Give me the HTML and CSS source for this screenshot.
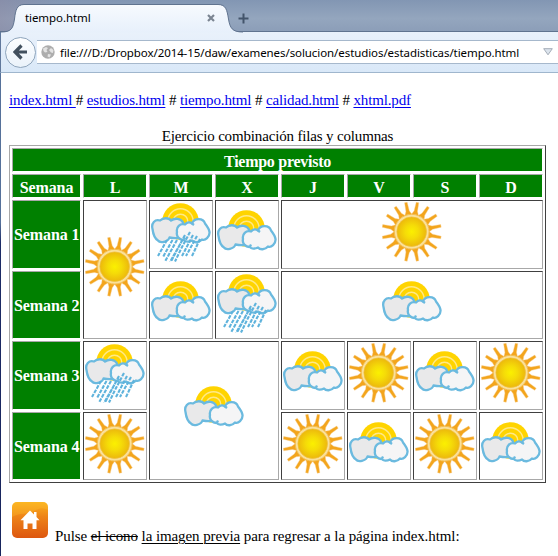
FILE: index.html
```html
<!DOCTYPE html>
<html lang="es">
<head>
<meta charset="utf-8">
<title>tiempo.html</title>
<link rel="stylesheet" href="styles.css">
</head>
<body>
<svg class="defs" width="0" height="0" aria-hidden="true">
  <defs>
    <radialGradient id="disc"><stop offset="0" stop-color="#fbf000"/><stop offset=".45" stop-color="#f5dc08"/><stop offset="1" stop-color="#ecb80c"/></radialGradient>
    <linearGradient id="homeFill" x1="0" y1="0" x2="0" y2="1"><stop offset="0" stop-color="#fbb21e"/><stop offset=".4" stop-color="#ee8418"/><stop offset="1" stop-color="#dd5710"/></linearGradient>
    <linearGradient id="tabFill" x1="0" y1="0" x2="0" y2="1"><stop offset="0" stop-color="#f7fafe"/><stop offset="1" stop-color="#e7f0fb"/></linearGradient>
    <g id="ray"><path d="M-3.6-17 L-1.7-21 L-1.3-29.8 H1.3 L1.7-21 L3.6-17Z"/></g>
    <g id="rays4"><use href="#ray" transform="rotate(11.25)"/><use href="#ray" transform="rotate(33.75)"/><use href="#ray" transform="rotate(56.25)"/><use href="#ray" transform="rotate(78.75)"/></g>
    <symbol id="sun" viewBox="0 0 60 60">
      <g transform="translate(29.7 29.7)">
        <g fill="#f3a51c" stroke="#f8cf91" stroke-width=".4"><use href="#rays4"/><use href="#rays4" transform="rotate(90)"/><use href="#rays4" transform="rotate(180)"/><use href="#rays4" transform="rotate(270)"/></g>
        <circle r="17.4" fill="#fae09a" stroke="#f3bc4c" stroke-width="1"/>
        <circle r="14.8" fill="url(#disc)" stroke="#efc03c" stroke-width=".7"/>
      </g>
    </symbol>
    <g id="cloudart">
      <circle cx="29.5" cy="26.5" r="18.3" fill="#ffd400"/>
      <g fill="none" stroke="#ffe987" stroke-width="1.5"><circle cx="29.5" cy="26.5" r="12.7"/><circle cx="29.5" cy="26.5" r="7.3"/></g>
      <g stroke="#6bbadf" stroke-width="2.3" stroke-linejoin="round">
        <path fill="#e9e9ea" d="M1.500 34C0 28 4 24 9 25.500C12 22.500 18 22.500 20 25.500C24 22.500 30 23.500 32 27.500L34 36L27 43C24 43.500 21 43 18.500 42.500C17 47 9 48.500 7 45.500C3 43 2 38 1.500 34Z"/>
        <path fill="#f5f5f6" d="M26 37C25 32 29 28 34 29.500C36 27 39 27 41 28.500C43 23 52 22.500 54 28.500C56 31 58 34 58.500 37C59 42 54 46 51 44.500C48 48 43 48 41 45.500C38 47 34 47 33 45C28 45 25 41 26 37Z"/>
        <path fill="none" d="M41 28.500L43 30M33 44.500L34 42.500"/>
      </g>
    </g>
    <symbol id="cloud" viewBox="0 0 60 60"><use href="#cloudart"/></symbol>
    <symbol id="rain" viewBox="0 0 60 60">
      <use href="#cloudart" y="-7"/>
      <g fill="none" stroke="#5fb3dc" stroke-width="2.1" stroke-dasharray="3.800 1.200">
        <path d="M16 38L7 54M21.500 38L12 55M26 38L14 59.500M31.500 38L19 60M34 33L25 50L20 59.500M39 30L30 47L24 59.500M42 33L31 54M46 34L35 54M49 37L41 54"/>
      </g>
    </symbol>
  </defs>
</svg>

<header class="browser">
  <div class="tabstrip">
    <div class="tab">
      <svg class="tab-shape" width="244" height="29" viewBox="0 0 244 29"><path d="M1 28.500C12 28 13 24 14.500 15C15.500 6 17 .8 24 .8H218C226 .8 227 6 228.500 15C230 24 232 28 243 28.500Z" fill="url(#tabFill)"/><path d="M1 28C12 28 13 24 14.500 15C15.500 6 17 .5 24 .5H218C226 .5 227 6 228.500 15C230 24 232 28 243 28" fill="none" stroke="#60738f"/></svg>
      <span class="tab-title">tiempo.html</span>
      <svg class="tab-close" width="8" height="8" viewBox="0 0 8 8"><path d="M1 1L7 7M7 1L1 7" stroke="#7b8592" stroke-width="2.200"/></svg>
    </div>
    <svg class="plus" width="11" height="11" viewBox="0 0 11 11"><path d="M5.500 .5V10.500M.5 5.500H10.500" stroke="#43546b" stroke-width="2"/></svg>
  </div>
  <div class="navbar">
    <div class="back"><svg width="15" height="16" viewBox="0 0 15 16"><path d="M8.500 1.500L2 8L8.500 14.500M2.500 8H14" fill="none" stroke="#42505e" stroke-width="3.200"/></svg></div>
    <div class="urlbar">
      <svg width="14" height="14" viewBox="0 0 14 14"><circle cx="7" cy="7" r="6.700" fill="#adadad"/><path d="M2 3.500L5 2L7 3L5.500 5L6.500 7L4 7.500L2.500 6ZM8 5L10 3L12.500 5L12 8L10 7.500ZM7 9L10 9.500L8.500 12.500L6.500 11.500Z" fill="#e3e3e3"/></svg>
      <span class="url">file:///D:/Dropbox/2014-15/daw/examenes/solucion/estudios/estadisticas/tiempo.html</span>
      <svg class="drop" width="10" height="8" viewBox="0 0 10 8"><path d="M.7 .7H9.300L5 6.800Z" fill="#dce4ed" stroke="#a3acb7"/></svg>
    </div>
  </div>
</header>

<main class="page">
  <nav class="links"><a href="#">index.html </a># <a href="#">estudios.html</a> # <a href="#">tiempo.html</a> # <a href="#">calidad.html</a> # <a href="#">xhtml.pdf</a></nav>

  <table class="forecast">
    <caption>Ejercicio combinación filas y columnas</caption>
    <colgroup><col class="week"><col span="7" class="day"></colgroup>
    <tr class="head title"><th colspan="8">Tiempo previsto</th></tr>
    <tr class="head"><th>Semana</th><th>L</th><th>M</th><th>X</th><th>J</th><th>V</th><th>S</th><th>D</th></tr>
    <tr class="tall"><th>Semana 1</th><td rowspan="2"><svg><use href="#sun"/></svg></td><td><svg><use href="#rain"/></svg></td><td><svg><use href="#cloud"/></svg></td><td colspan="4"><svg><use href="#sun"/></svg></td></tr>
    <tr class="short"><th>Semana 2</th><td><svg><use href="#cloud"/></svg></td><td><svg><use href="#rain"/></svg></td><td colspan="4"><svg><use href="#cloud"/></svg></td></tr>
    <tr class="tall"><th>Semana 3</th><td><svg><use href="#rain"/></svg></td><td colspan="2" rowspan="2"><svg><use href="#cloud"/></svg></td><td><svg><use href="#cloud"/></svg></td><td><svg><use href="#sun"/></svg></td><td><svg><use href="#cloud"/></svg></td><td><svg><use href="#sun"/></svg></td></tr>
    <tr class="short"><th>Semana 4</th><td><svg><use href="#sun"/></svg></td><td><svg><use href="#sun"/></svg></td><td><svg><use href="#cloud"/></svg></td><td><svg><use href="#sun"/></svg></td><td><svg><use href="#cloud"/></svg></td></tr>
  </table>

  <p class="return">
    <svg class="home" width="36" height="36" viewBox="0 0 36 36"><rect width="36" height="36" rx="5" fill="url(#homeFill)"/><path d="M0 15C9 10 15 13 22 9S32 6 36 8V4C36 2 34 0 31 0H5C2 0 0 2 0 5Z" fill="#ffc52d" opacity=".3"/><path d="M18 8.500L8.500 18.200H11.500V27H15.500V21.500H20.500V27H24.500V18.200H27.500L24.500 15V10H22V12.500Z" fill="#fff"/></svg>
    <span class="sentence">Pulse <del>el icono</del> <ins>la imagen previa</ins> para regresar a la página index.html:</span>
  </p>
</main>
</body>
</html>
```
FILE: styles.css
```css
* { box-sizing: border-box; }
html, body { margin: 0; height: 556px; overflow: hidden; }
body { background: #fff; color: #000; font: 15px/19px "Liberation Serif", serif; }
.defs { position: absolute; }

.browser { font-family: "Noto Sans", sans-serif; font-size: 11.5px; letter-spacing: -.08px; }
.tabstrip { height: 32px; display: flex; align-items: flex-start; padding-top: 4px;
  background: linear-gradient(90deg, #8d87a080, #8d87a000 60px), linear-gradient(#8296b3, #94a6be 60%, #8c9eb8); border-bottom: 1px solid #60738f; }
.tab { position: relative; width: 243px; height: 28px; display: flex; align-items: center; padding-left: 25px; }
.tab-shape { position: absolute; left: 0; top: 0; }
.tab-title { position: relative; width: 182px; line-height: 28px; }
.tab-close { position: relative; }
.plus { margin: 9px 0 0 -5px; }
.navbar { height: 41px; display: flex; align-items: center; padding-left: 4px; border-left: 1px solid #60789c;
  background: linear-gradient(#e9f1fb, #d9e8f8); border-bottom: 1px solid #9fb6cd; }
.back { width: 31px; height: 31px; flex: none; border-radius: 50%; border: 1px solid #8fa5bc; display: flex; align-items: center; justify-content: center;
  background: linear-gradient(#fdfeff, #eaf2fa); }
.urlbar { flex: 1; height: 24px; margin-left: 1px; padding: 0 5px 0 4px; display: flex; align-items: center; background: #fff;
  border-top: 1px solid #a6b8cc; border-bottom: 1px solid #a6b8cc; }
.url { margin-left: 5px; white-space: nowrap; }
.drop { margin-left: auto; }

.page { height: 483px; padding: 18px 0 0 8px; border-left: 1px solid;
  border-image: linear-gradient(#56719a, #56719a 150px, #1d2c66 170px, #17245c) 1; border-width: 0 0 0 1px; }
.links { white-space: nowrap; letter-spacing: -.14px; }
a { color: #00e; text-underline-offset: 2px; text-decoration-thickness: 1px; }
ins { text-underline-offset: 2px; text-decoration-thickness: 1px; }

.forecast { width: 537px; margin-top: 16px; table-layout: fixed; border-collapse: separate; border-spacing: 2px;
  border: 1px solid; border-color: #a8a8a8 #404040 #404040 #a8a8a8; }
caption { height: 19px; line-height: 18px; padding-top: 1px; letter-spacing: -.16px; }
.week { width: 69px; }
.day { width: 64px; }
th, td { padding: 1px; border: 1px solid; text-align: center; vertical-align: middle; white-space: nowrap; }
th { background: green; color: #fff; border-color: #a8a8a8 #fff #fff #a8a8a8; font-size: 16px; letter-spacing: -.1px; }
td { border-color: #404040 #a8a8a8 #a8a8a8 #404040; }
.head { height: 24px; }
.head th { padding: 2px 1px 0; }
.title th { letter-spacing: -.27px; }
.tall { height: 69px; }
.short { height: 68px; }
td svg { display: block; width: 60px; height: 60px; margin: 0 auto 5px; }
.short td svg { margin-bottom: 4px; }

.return { margin: 19px 0 0; padding-left: 3px; display: flex; align-items: flex-start; white-space: nowrap; letter-spacing: -.09px; }
.sentence { margin: 25px 0 0 7px; }
```
